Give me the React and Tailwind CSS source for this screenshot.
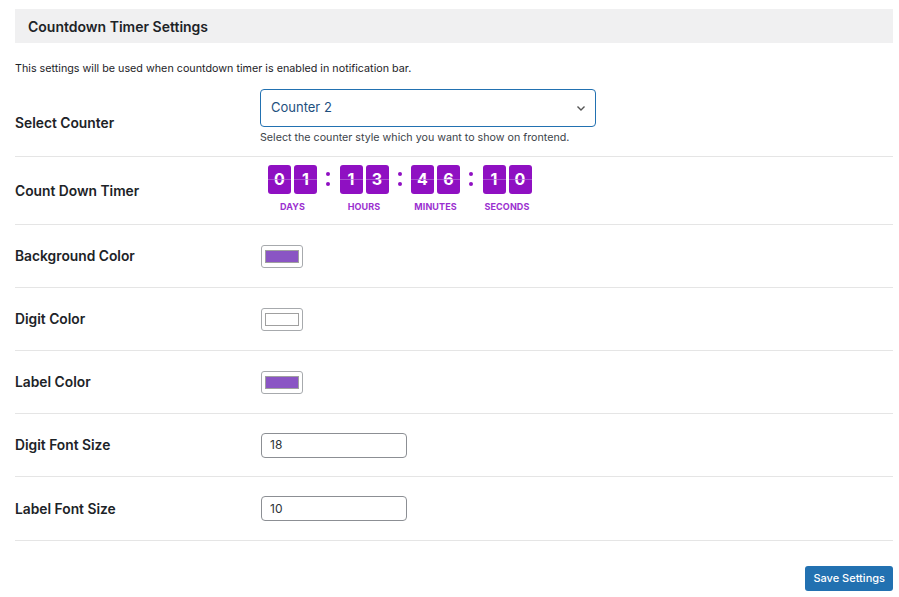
import React from "react";

const font = { fontFamily: "Inter, 'Helvetica Neue', Arial, sans-serif" };

function Digit({ d }) {
  return (
    <div className="relative w-[23px] h-[29px] bg-[#8f10c2] rounded-[3px] flex items-center justify-center text-white text-[16px] font-bold leading-none">
      {d}
      <div className="absolute left-0 right-0 top-1/2 h-px bg-[#b36fd6] opacity-70" />
    </div>
  );
}

function Group({ a, b, label }) {
  return (
    <div className="flex flex-col items-center">
      <div className="flex gap-[3px]">
        <Digit d={a} />
        <Digit d={b} />
      </div>
      <div className="mt-[6px] text-[9px] font-bold text-[#9b30d0] tracking-[0.01em]">{label}</div>
    </div>
  );
}

function Colon() {
  return (
    <div className="w-[22.5px] h-[29px] flex flex-col items-center justify-center gap-[6px]">
      <div className="w-[4px] h-[4px] rounded-full bg-[#8f10c2]" />
      <div className="w-[4px] h-[4px] rounded-full bg-[#8f10c2]" />
    </div>
  );
}

function Swatch({ color }) {
  return (
    <div className="w-[42px] h-[23px] border border-[#a7aaad] rounded-[3px] bg-white flex items-center justify-center">
      <div className="w-[34px] h-[13px] border border-[#a0a0a0]" style={{ background: color }} />
    </div>
  );
}

function Row({ label, children, h = "h-[63px]" }) {
  return (
    <div className={`flex items-center border-b border-[#e5e5e5] ${h}`}>
      <div className="w-[245px] text-[13.8px] font-semibold text-[#1d2327] pt-[1px]">{label}</div>
      <div className="flex-1">{children}</div>
    </div>
  );
}

export default function App() {
  return (
    <div className="w-[899px] h-[597px] bg-white relative" style={font}>
      <div className="pt-[9px] px-[15px] pr-[6px]">
        <div className="h-[34px] bg-[#f0f0f1] flex items-center pl-[13px] text-[14px] font-semibold text-[#1d2327]">
          Countdown Timer Settings
        </div>
        <div className="mt-[18px] text-[10.75px] text-[#1d2327]">
          This settings will be used when countdown timer is enabled in notification bar.
        </div>
        <div className="mt-[12px]">
          <div className="flex border-b border-[#e5e5e5] h-[68px]">
            <div className="w-[245px] text-[13.8px] font-semibold text-[#1d2327] pt-[24px]">Select Counter</div>
            <div className="flex-1">
              <div className="w-[336px] h-[38px] border-[1.5px] border-[#2271b1] rounded-[4px] flex items-center justify-between pl-[10px] pr-[8px] text-[13px] text-[#1d4f7e]">
                <span>Counter 2</span>
                <svg width="12" height="12" viewBox="0 0 12 12" fill="none" stroke="#555" strokeWidth="1.4">
                  <path d="M2.5 4.5 L6 8 L9.5 4.5" />
                </svg>
              </div>
              <div className="mt-[3px] text-[10.7px] text-[#3c434a]">Select the counter style which you want to show on frontend.</div>
            </div>
          </div>
          <Row label="Count Down Timer" h="h-[68px]">
            <div className="flex items-start ml-[8px] -mt-[3px]">
              <Group a="0" b="1" label="DAYS" />
              <Colon />
              <Group a="1" b="3" label="HOURS" />
              <Colon />
              <Group a="4" b="6" label="MINUTES" />
              <Colon />
              <Group a="1" b="0" label="SECONDS" />
            </div>
          </Row>
          <Row label="Background Color">
            <div className="ml-[1px]"><Swatch color="#8a55c4" /></div>
          </Row>
          <Row label="Digit Color">
            <div className="ml-[1px]"><Swatch color="#ffffff" /></div>
          </Row>
          <Row label="Label Color">
            <div className="ml-[1px]"><Swatch color="#8a55c4" /></div>
          </Row>
          <Row label="Digit Font Size">
            <div className="ml-[1px] w-[146px] h-[25px] border border-[#8c8f94] rounded-[4px] flex items-center px-[8px] text-[12px] text-[#2c3338]">18</div>
          </Row>
          <Row label="Label Font Size" h="h-[64px]">
            <div className="ml-[1px] w-[146px] h-[25px] border border-[#8c8f94] rounded-[4px] flex items-center px-[8px] text-[12px] text-[#2c3338]">10</div>
          </Row>
        </div>
        <div className="flex justify-end mt-[25px]">
          <button className="h-[25px] px-[8px] bg-[#2271b1] rounded-[3px] text-white text-[11px] font-medium">Save Settings</button>
        </div>
      </div>
    </div>
  );
}
